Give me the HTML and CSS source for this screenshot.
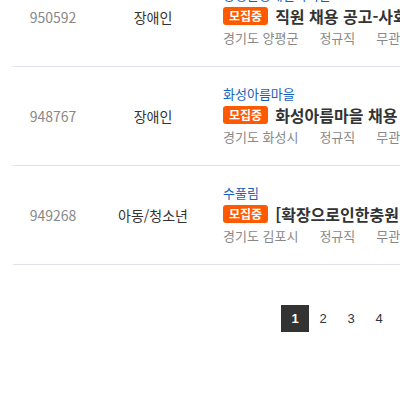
FILE: index.html
```html
<!DOCTYPE html>
<html lang="ko">
<head>
    <meta charset="UTF-8">
    <meta name="viewport" content="width=device-width, initial-scale=1.0">
    <title>채용 공고</title>
    <link rel="stylesheet" href="styles.css">
</head>
<body>
    <div class="board">
        <div class="job-list">
            <div class="job-row">
                <div class="col-no">950592</div>
                <div class="col-cat">장애인</div>
                <div class="col-info">
                    <div class="org">양평군장애인복지관</div>
                    <div class="title-line">
                        <span class="badge">모집중</span>
                        <span class="title">직원 채용 공고-사회복지사</span>
                    </div>
                    <div class="meta">
                        <span>경기도 양평군</span>
                        <span>정규직</span>
                        <span>무관</span>
                    </div>
                </div>
            </div>
            <div class="job-row">
                <div class="col-no">948767</div>
                <div class="col-cat">장애인</div>
                <div class="col-info">
                    <div class="org">화성아름마을</div>
                    <div class="title-line">
                        <span class="badge">모집중</span>
                        <span class="title">화성아름마을 채용</span>
                    </div>
                    <div class="meta">
                        <span>경기도 화성시</span>
                        <span>정규직</span>
                        <span>무관</span>
                    </div>
                </div>
            </div>
            <div class="job-row">
                <div class="col-no">949268</div>
                <div class="col-cat">아동/청소년</div>
                <div class="col-info">
                    <div class="org">수풀림</div>
                    <div class="title-line">
                        <span class="badge">모집중</span>
                        <span class="title">[확장으로인한충원</span>
                    </div>
                    <div class="meta">
                        <span>경기도 김포시</span>
                        <span>정규직</span>
                        <span>무관</span>
                    </div>
                </div>
            </div>
        </div>

        <div class="pagination">
            <a class="page active">1</a>
            <a class="page">2</a>
            <a class="page">3</a>
            <a class="page">4</a>
        </div>
    </div>
</body>
</html>
```

FILE: styles.css
```css
html, body {
    margin: 0;
    padding: 0;
    overflow: hidden;
}
body {
    font-family: "Noto Sans CJK KR", "Noto Sans", sans-serif;
    color: #333333;
    background-color: #ffffff;
}
.board {
    width: 760px;
    padding-left: 13px;
    margin-top: -32px;
}
.job-row {
    display: flex;
    align-items: center;
    border-bottom: 1px solid #e1e1ea;
    padding: 18px 0;
    height: 62px;
}
.col-no {
    width: 80px;
    text-align: center;
    font-size: 14px;
    color: #888888;
}
.col-cat {
    width: 120px;
    text-align: center;
    font-size: 14px;
    color: #333333;
}
.col-info {
    flex: 1;
    padding-left: 10px;
    white-space: nowrap;
}
.org {
    font-size: 13px;
    line-height: 18px;
    color: #1560bd;
}
.title-line {
    display: flex;
    align-items: center;
    gap: 7px;
    height: 24px;
}
.badge {
    background-color: #ff5a00;
    color: #ffffff;
    font-size: 12px;
    font-weight: 700;
    line-height: 18px;
    padding: 0 6px;
    border-radius: 3px;
}
.title {
    font-size: 16px;
    font-weight: 700;
    color: #333333;
}
.meta {
    display: flex;
    gap: 21px;
    font-size: 13px;
    line-height: 20px;
    color: #888888;
}
.pagination {
    display: flex;
    margin-top: 40px;
    margin-left: 268px;
}
.page {
    width: 28px;
    height: 27px;
    line-height: 27px;
    text-align: center;
    font-size: 13px;
    color: #333333;
    font-family: "Liberation Sans", "Noto Sans", sans-serif;
    cursor: pointer;
}
.page.active {
    background-color: #333333;
    color: #ffffff;
    font-weight: 700;
}
```
